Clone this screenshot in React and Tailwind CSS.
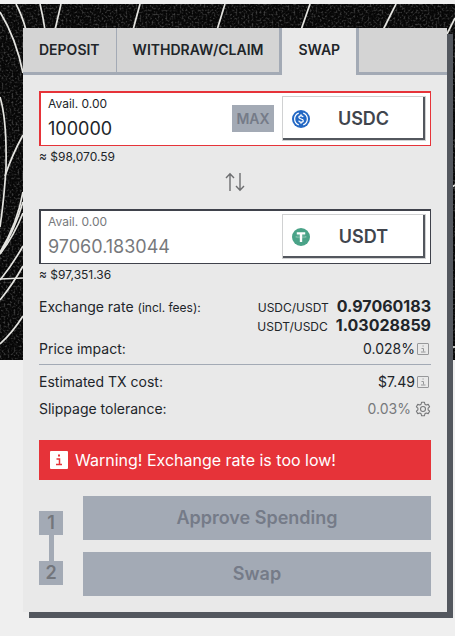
import { useState } from 'react';

const tabs = [
  { id: 'deposit', label: 'DEPOSIT' },
  { id: 'withdraw', label: 'WITHDRAW/CLAIM' },
  { id: 'swap', label: 'SWAP' },
];

const tabStyles = {
  deposit: 'bg-[#d4d4d4] border-b-[3px] border-r border-[#a3aab5]',
  withdraw: 'bg-[#d4d4d4] border-b-[3px] border-[#a3aab5]',
  swap: 'bg-[#e9e9e9] border-x-[3px] border-[#a3aab5] pb-[3px]',
};

function Backdrop() {
  return (
    <svg
      aria-hidden="true"
      className="absolute inset-x-0 top-1 h-[356px] w-full"
      viewBox="0 4 455 356"
      preserveAspectRatio="xMinYMin slice"
    >
      <filter id="grain" x="0" y="0" width="100%" height="100%">
        <feTurbulence type="fractalNoise" baseFrequency="0.5" numOctaves="2" seed="4" />
        <feColorMatrix values="0 0 0 0 1  0 0 0 0 1  0 0 0 0 1  1.4 0 0 0 -0.65" />
      </filter>
      <rect y="4" width="455" height="356" fill="#060606" />
      <rect y="4" width="455" height="356" filter="url(#grain)" opacity="0.5" />
      <g fill="none" stroke="#e4e4e0" strokeWidth="1.7">
        <path d="M0 12Q16 38 23 73" />
        <path d="M16 4Q22 15 26 30" />
        <path d="M40 4Q43 16 45 30" />
        <path d="M61 4L55 30" />
        <path d="M140 4L133 30" />
        <path d="M225 4L217 30" />
        <path d="M310 4L301 30" />
        <path d="M396 4L383 30" />
        <path d="M455 18L447 34" />
        <path d="M0 97Q7 120 6 168Q4 200 0 227" />
        <path d="M23 135Q12 155 5 176" />
        <path d="M0 252Q17 225 23 192" />
        <path d="M0 254Q15 229 23 202" />
        <path d="M0 254Q14 236 23 213" />
        <path d="M0 280Q13 264 23 246" />
        <path d="M0 300Q13 284 23 266" />
        <path d="M0 279L23 278" />
        <path d="M0 344Q13 332 23 316" />
        <path d="M452 187L455 185" />
        <path d="M452 347L455 347" />
      </g>
    </svg>
  );
}

function UsdcIcon() {
  return (
    <svg viewBox="0 0 32 32" className="size-[18px]" aria-hidden="true">
      <circle cx="16" cy="16" r="16" fill="#2368c4" />
      <g fill="none" stroke="#fff" strokeWidth="2.2">
        <path d="M12 5.5a11.2 11.2 0 0 0 0 21" />
        <path d="M20 5.5a11.2 11.2 0 0 1 0 21" />
        <path d="M19.8 12.8c-.3-1.6-1.7-2.4-3.8-2.4-2.3 0-3.8 1-3.8 2.7 0 4 7.8 1.8 7.8 5.8 0 1.7-1.6 2.7-4 2.7-2.3 0-3.8-1-4-2.8" />
        <path d="M16 7.5v3M16 21.5v3" />
      </g>
    </svg>
  );
}

function UsdtIcon() {
  return (
    <svg viewBox="0 0 32 32" className="size-[18px]" aria-hidden="true">
      <circle cx="16" cy="16" r="16" fill="#4aa388" />
      <path d="M8.5 7.5h15v4h-5.4V25h-4.2V11.5H8.5z" fill="#fff" />
      <ellipse cx="16" cy="15.8" rx="9.5" ry="1.6" fill="none" stroke="#fff" strokeOpacity="0.6" strokeWidth="0.8" />
    </svg>
  );
}

function SwapArrows() {
  return (
    <svg
      viewBox="0 0 20 20"
      className="size-5"
      fill="none"
      stroke="#6d6e70"
      strokeWidth="1.4"
      aria-hidden="true"
    >
      <path d="M5 19V2M1 6l4-4.2L9 6" />
      <path d="M15 1v17M11 14l4 4.2 4-4.2" />
    </svg>
  );
}

function InfoIcon() {
  return (
    <svg viewBox="0 0 12 12" className="size-3" fill="none" stroke="#97989a" aria-hidden="true">
      <rect x="0.5" y="0.5" width="11" height="11" rx="0.5" />
      <path d="M4.5 5.5h2v3M4 9h4.5M5.5 3h1.2" />
    </svg>
  );
}

function AlertIcon() {
  return (
    <svg viewBox="0 0 18 18" className="size-[18px]" aria-hidden="true">
      <rect width="18" height="18" rx="1" fill="#fff" />
      <path d="M6.5 8h3v5M6 13.5h6" fill="none" stroke="#e63339" strokeWidth="1.5" />
      <rect x="8" y="3.5" width="2" height="2" fill="#e63339" />
    </svg>
  );
}

function GearIcon() {
  return (
    <svg
      viewBox="0 0 16 16"
      className="size-4"
      fill="none"
      stroke="#77787a"
      strokeWidth="1.1"
      strokeLinejoin="round"
      aria-hidden="true"
    >
      <path d="M6.6 1.2h2.8l.5 2 1.3.8 2-.6 1.4 2.4-1.5 1.400v1.600l1.500 1.400-1.400 2.400-2-.6-1.300.8-.5 2H6.600l-.5-2-1.300-.8-2 .6-1.400-2.400 1.500-1.400V7.200L1.400 5.800l1.400-2.400 2 .6 1.300-.8z" />
      <circle cx="8" cy="8" r="2.5" />
    </svg>
  );
}

function TokenButton({ symbol, icon }) {
  return (
    <button
      type="button"
      className="mt-[3px] mr-1 flex h-[45px] w-36 shrink-0 items-center border border-[#d0d1d2] bg-white pl-[9px] text-lg font-semibold text-[#41454d] shadow-[inset_-2px_-2px_0_#53575e]"
    >
      {icon}
      <span className="flex-1 pr-2 text-center">{symbol}</span>
    </button>
  );
}

function AmountField({ id, value, onChange, readOnly, error, symbol, icon }) {
  const border = error ? 'border-[#e63339]' : 'border-[#3f424b]';
  const color = readOnly ? 'text-[#77797c]' : 'text-[#212529]';

  return (
    <div className={`flex h-[55px] border-t-2 border-r border-b border-l-2 bg-white ${border} ${color}`}>
      <div className="min-w-0 flex-1 pt-[3px] pl-[7px]">
        <label htmlFor={id} className="block text-xs leading-4">
          Avail. 0.00
        </label>
        <input
          id={id}
          type="text"
          value={value}
          readOnly={readOnly}
          onChange={onChange}
          className="mt-[3px] block h-7 w-full bg-transparent text-lg leading-7 outline-none"
        />
      </div>
      {!readOnly && (
        <button
          type="button"
          disabled
          className="mt-3 mr-2 h-[27px] w-[42px] shrink-0 bg-[#a3aab5] text-sm font-semibold text-[#757b88]"
        >
          MAX
        </button>
      )}
      <TokenButton symbol={symbol} icon={icon} />
    </div>
  );
}

function Rate({ pair, value }) {
  return (
    <div className="flex h-[19px] items-baseline justify-end gap-2">
      <span>{pair}</span>
      <strong className="text-base leading-[19px] font-bold">{value}</strong>
    </div>
  );
}

export default function App() {
  const [active, setActive] = useState('swap');
  const [amount, setAmount] = useState('100000');

  return (
    <main className="relative min-h-screen bg-[#efefef] pt-7 pr-2 pb-6 pl-[23px] font-['Inter',sans-serif] text-[#212529]">
      <Backdrop />

      <section className="relative bg-[#e9e9e9] shadow-[6px_6px_0_#53575e]">
        <div role="tablist" className="flex h-[47px] bg-[#d4d4d4]">
          {tabs.map((tab) => (
            <button
              key={tab.id}
              type="button"
              role="tab"
              aria-selected={active === tab.id}
              onClick={() => setActive(tab.id)}
              className={`px-4 text-sm font-semibold ${tabStyles[tab.id]}`}
            >
              {tab.label}
            </button>
          ))}
          <div className="flex-1 border-b-[3px] border-[#a3aab5]" />
        </div>

        <form className="p-4" onSubmit={(e) => e.preventDefault()}>
          <AmountField
            id="amount-from"
            value={amount}
            onChange={(e) => setAmount(e.target.value)}
            error
            symbol="USDC"
            icon={<UsdcIcon />}
          />
          <p className="mt-[3px] text-xs leading-4">≈ $98,070.59</p>

          <div className="mt-[7px] mb-[17px] flex justify-center">
            <button type="button" aria-label="Flip tokens">
              <SwapArrows />
            </button>
          </div>

          <AmountField
            id="amount-to"
            value="97060.183044"
            readOnly
            symbol="USDT"
            icon={<UsdtIcon />}
          />
          <p className="mt-[3px] text-xs leading-4">≈ $97,351.36</p>

          <dl className="mt-[14px] text-sm leading-5">
            <div className="flex justify-between">
              <dt>
                Exchange rate <span className="text-xs">(incl. fees):</span>
              </dt>
              <dd className="text-right text-xs leading-[19px]">
                <Rate pair="USDC/USDT" value="0.97060183" />
                <Rate pair="USDT/USDC" value="1.03028859" />
              </dd>
            </div>
            <div className="flex justify-between border-b border-[#a3aab5] pt-1 pb-[5px]">
              <dt>Price impact:</dt>
              <dd className="flex items-center gap-[2px] pr-[2px]">
                0.028%
                <InfoIcon />
              </dd>
            </div>
            <div className="mt-[7px] flex justify-between">
              <dt>Estimated TX cost:</dt>
              <dd className="flex items-center gap-[2px] pr-[2px]">
                $7.49
                <InfoIcon />
              </dd>
            </div>
            <div className="mt-[7px] flex justify-between">
              <dt>Slippage tolerance:</dt>
              <dd className="flex items-center gap-1 text-[#77797c]">
                0.03%
                <button type="button" aria-label="Slippage settings">
                  <GearIcon />
                </button>
              </dd>
            </div>
          </dl>

          <div role="alert" className="mt-[21px] flex h-10 items-center gap-[7px] bg-[#e63339] px-[11px] text-base text-white">
            <AlertIcon />
            Warning! Exchange rate is too low!
          </div>

          <div className="mt-4 flex items-center gap-5">
            <ol className="mt-[3px] flex flex-col items-center text-lg leading-6 font-semibold text-[#73767c]">
              <li className="size-6 bg-[#a3aab5] text-center">1</li>
              <li aria-hidden="true" className="h-[26px] w-[5px] bg-[#a3aab5]" />
              <li className="size-6 bg-[#a3aab5] text-center">2</li>
            </ol>
            <div className="flex flex-1 flex-col gap-3 text-lg font-semibold text-[#757b88]">
              <button type="button" disabled className="h-11 bg-[#a3aab5]">
                Approve Spending
              </button>
              <button type="submit" disabled className="h-11 bg-[#a3aab5]">
                Swap
              </button>
            </div>
          </div>
        </form>
      </section>
    </main>
  );
}
